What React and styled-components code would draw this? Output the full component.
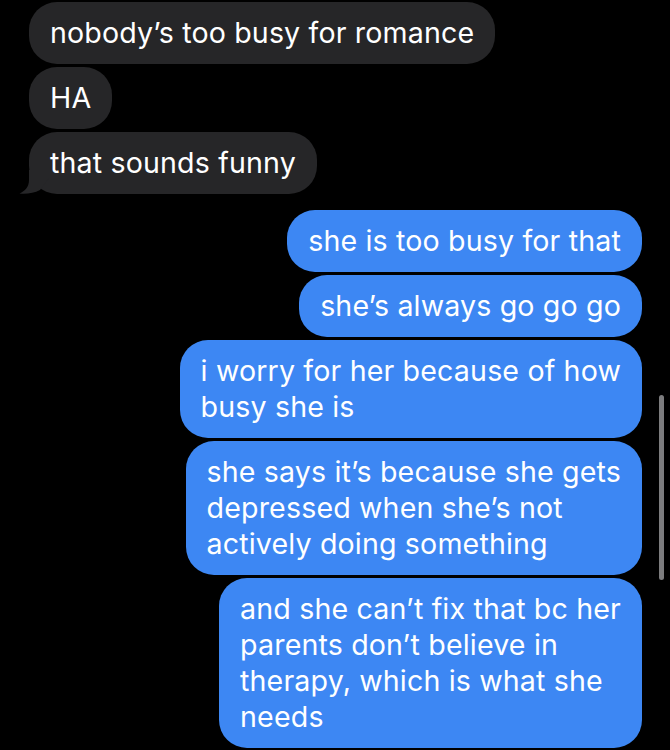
import React from "react";
import styled, { createGlobalStyle } from "styled-components";

const GlobalStyle = createGlobalStyle`
  html, body {
    margin: 0;
    padding: 0;
    background: #000;
  }
  body {
    width: 670px;
    height: 750px;
    overflow: hidden;
    font-family: "Inter", "Liberation Sans", Arial, sans-serif;
  }
`;

const Screen = styled.div`
  position: relative;
  width: 670px;
  height: 750px;
  overflow: hidden;
  background: #000;
  box-sizing: border-box;
  padding: 2px 28px 0 29px;
  display: flex;
  flex-direction: column;
  gap: 16px;
`;

const Group = styled.div`
  display: flex;
  flex-direction: column;
  align-items: ${(p) => (p.$mine ? "flex-end" : "flex-start")};
  gap: 3px;
`;

const Bubble = styled.div`
  position: relative;
  box-sizing: border-box;
  padding: 13px 21px;
  border-radius: 28px;
  background: ${(p) => (p.$mine ? "#3d87f3" : "#262628")};
  color: #fff;
  font-size: 28.6px;
  line-height: 36px;
  letter-spacing: 0.15px;
  white-space: nowrap;
`;

const TailSvg = styled.svg`
  position: absolute;
  left: -10px;
  bottom: 0;
  width: 34px;
  height: 24px;
`;

const ScrollThumb = styled.div`
  position: absolute;
  right: 6px;
  top: 395px;
  width: 5px;
  height: 185px;
  border-radius: 3px;
  background: #7c7c7e;
`;

const received = [
  ["nobody’s too busy for romance"],
  ["HA"],
  ["that sounds funny"],
];

const sent = [
  ["she is too busy for that"],
  ["she’s always go go go"],
  ["i worry for her because of how", "busy she is"],
  ["she says it’s because she gets", "depressed when she’s not", "actively doing something"],
  ["and she can’t fix that bc her", "parents don’t believe in", "therapy, which is what she", "needs"],
];

function Tail() {
  return (
    <TailSvg viewBox="0 0 34 24">
      <path
        d="M10 0 L10 10 C10 17 6 21 0.5 23.6 C8 24.4 15 23 21 20 L30 8 L30 0 Z"
        fill="#262628"
      />
    </TailSvg>
  );
}

function Message({ lines, mine, tail }) {
  return (
    <Bubble $mine={mine}>
      {lines.map((line, i) => (
        <React.Fragment key={i}>
          {i > 0 && <br />}
          {line}
        </React.Fragment>
      ))}
      {tail && <Tail />}
    </Bubble>
  );
}

export default function App() {
  return (
    <>
      <GlobalStyle />
      <Screen>
        <Group>
          {received.map((lines, i) => (
            <Message key={i} lines={lines} tail={i === received.length - 1} />
          ))}
        </Group>
        <Group $mine>
          {sent.map((lines, i) => (
            <Message key={i} lines={lines} mine />
          ))}
        </Group>
        <ScrollThumb />
      </Screen>
    </>
  );
}
